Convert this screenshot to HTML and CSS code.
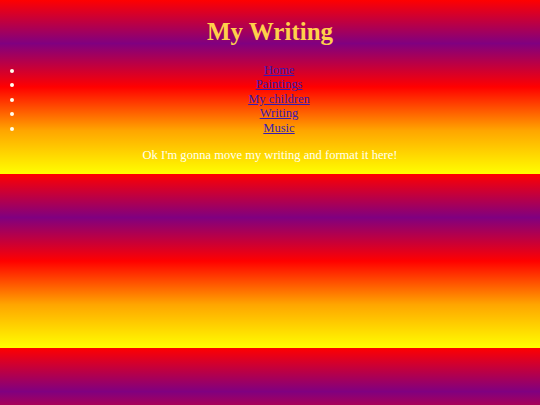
FILE: index.html
```html
<!DOCTYPE html>
<html>
<head>
<meta charset="utf-8">
<title>My Writing</title>
<link rel="stylesheet" href="styles.css">
</head>
<body class="page">
<h1 class="title">My Writing</h1>
<ul class="nav">
<li><a href="#">Home</a></li>
<li><a href="#">Paintings</a></li>
<li><a href="#">My children</a></li>
<li><a href="#">Writing</a></li>
<li><a href="#">Music</a></li>
</ul>
<p class="intro">Ok I'm gonna move my writing and format it here!</p>
</body>
</html>
```
FILE: styles.css
```css
.page {
  margin: 0 6px;
  font-family: "Liberation Serif", "Times New Roman", serif;
  font-size: 12.56px;
  line-height: 14.4px;
  color: #fffff0;
  text-align: center;
  background: linear-gradient(#ff0000, #800080, #ff0000, #ffa500, #ffff00);
}
.title {
  font-size: 25px;
  line-height: 29px;
  font-weight: bold;
  margin: 17px 0;
  color: #ffd04a;
}
.nav {
  margin: 12.5px 0;
  padding-left: 18px;
}
.nav a {
  color: #3a1ab0;
}
.intro {
  margin: 12.5px 0;
}
```
